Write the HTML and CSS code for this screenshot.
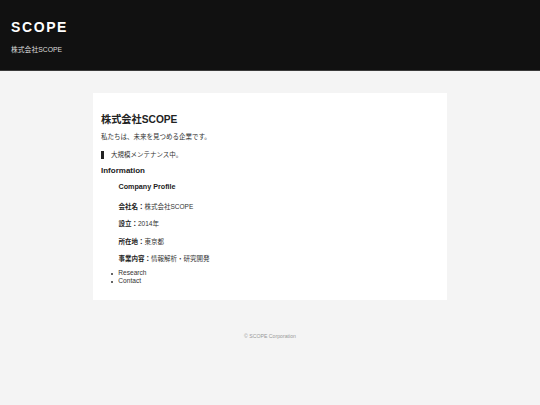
FILE: index.html
```html
<!DOCTYPE html>
<html lang="ja">
<head>
<meta charset="utf-8">
<title>株式会社SCOPE</title>
<link rel="stylesheet" href="styles.css">
</head>
<body>
<header class="site-header">
  <h1 class="logo">SCOPE</h1>
  <p class="tagline">株式会社SCOPE</p>
</header>
<main class="card">
  <h2 class="title">株式会社SCOPE</h2>
  <p class="lead">私たちは、未来を見つめる企業です。</p>
  <blockquote class="notice">大規模メンテナンス中。</blockquote>
  <h3 class="section-title">Information</h3>
  <section class="profile">
    <h4 class="profile-title">Company Profile</h4>
    <p class="row"><strong>会社名：</strong>株式会社SCOPE</p>
    <p class="row"><strong>設立：</strong>2014年</p>
    <p class="row"><strong>所在地：</strong>東京都</p>
    <p class="row"><strong>事業内容：</strong>情報解析・研究開発</p>
  </section>
  <ul class="links">
    <li>Research</li>
    <li>Contact</li>
  </ul>
</main>
<footer class="site-footer">© SCOPE Corporation</footer>
</body>
</html>
```
FILE: styles.css
```css
html, body {
  margin: 0;
  padding: 0;
}
body {
  background: #f4f4f4;
  font-family: "Liberation Sans", Arial, "Noto Sans CJK JP", sans-serif;
  color: #333;
}
.site-header {
  background: #111;
  border-bottom: 1px solid #3a3a3a;
  padding: 19px 11px 0;
  height: 51px;
}
.logo {
  margin: 0;
  font-size: 14px;
  line-height: 16px;
  font-weight: bold;
  letter-spacing: 1.6px;
  color: #fff;
}
.tagline {
  margin: 10.5px 0 0;
  font-size: 6.8px;
  line-height: 8px;
  color: #ddd;
}
.card {
  display: block;
  width: 354px;
  box-sizing: border-box;
  margin: 21.5px auto 0;
  background: #fff;
  padding: 8px;
}
.title {
  margin: 12.4px 0 0;
  font-size: 10.2px;
  line-height: 13px;
  font-weight: bold;
  color: #222;
}
.lead {
  margin: 7.4px 0 0;
  font-size: 6.5px;
  line-height: 8px;
}
.notice {
  margin: 10px 0 0;
  border-left: 3px solid #222;
  padding-left: 7px;
  font-size: 6.5px;
  line-height: 8px;
}
.section-title {
  margin: 7px 0 0;
  font-size: 8px;
  line-height: 10px;
  font-weight: bold;
  color: #222;
}
.profile {
  margin: 0 0 0 17.5px;
}
.profile-title {
  margin: 5.5px 0 0;
  font-size: 7.2px;
  line-height: 9px;
  font-weight: bold;
  color: #222;
}
.row {
  margin: 9.5px 0 0;
  font-size: 6.5px;
  line-height: 8px;
}
.profile-title + .row {
  margin-top: 12px;
}
.row strong {
  color: #222;
}
.links {
  margin: 6px 0 7px;
  padding-left: 17.3px;
  font-size: 6.6px;
  line-height: 8px;
  list-style: none;
}
.links li::before {
  content: "";
  display: inline-block;
  width: 2px;
  height: 2px;
  border-radius: 50%;
  background: #333;
  vertical-align: middle;
  margin-left: -7.6px;
  margin-right: 5.6px;
}
.site-footer {
  margin-top: 33px;
  text-align: center;
  font-size: 5.2px;
  line-height: 6px;
  color: #999;
}
```
